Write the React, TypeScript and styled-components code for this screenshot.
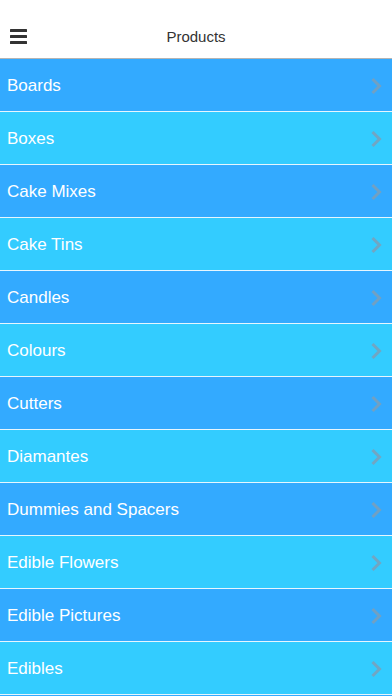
import React from "react";
import styled, { createGlobalStyle } from "styled-components";

const Global = createGlobalStyle`
  html, body { margin: 0; padding: 0; background: #ffffff; }
  body { font-family: "Liberation Sans", Arial, sans-serif; overflow: hidden; }
`;

const Page = styled.div`
  width: 392px;
  height: 696px;
  overflow: hidden;
  display: flex;
  flex-direction: column;
  background: #ffffff;
`;

const Header = styled.header`
  height: 59px;
  flex: none;
  display: grid;
  grid-template-columns: 60px 1fr 60px;
  align-items: center;
  padding-top: 15px;
  box-sizing: border-box;
  border-bottom: 1px solid #b4b4b4;
  background: #ffffff;
`;

const MenuButton = styled.div`
  display: flex;
  flex-direction: column;
  gap: 3px;
  padding-left: 10px;
  width: 17px;
`;

const MenuBar = styled.span`
  display: block;
  width: 17px;
  height: 3px;
  background: #333333;
  border-radius: 0.5px;
`;

const Title = styled.h1`
  margin: 0;
  text-align: center;
  font-size: 15px;
  font-weight: normal;
  color: #333333;
`;

const List = styled.ul`
  list-style: none;
  margin: 0;
  padding: 0;
  flex: 1;
  background: #33aaff;
`;

const Row = styled.li<{ $alt: boolean }>`
  height: 50px;
  display: flex;
  align-items: center;
  justify-content: space-between;
  padding: 2px 10px 0 7px;
  background: ${(p) => (p.$alt ? "#33ccff" : "#33aaff")};
  border-bottom: 1px solid #e6f6ff;
  color: #ffffff;
  font-size: 17px;
`;

const Chevron = styled.svg`
  width: 12px;
  height: 18px;
  flex: none;
`;

const items = [
  "Boards",
  "Boxes",
  "Cake Mixes",
  "Cake Tins",
  "Candles",
  "Colours",
  "Cutters",
  "Diamantes",
  "Dummies and Spacers",
  "Edible Flowers",
  "Edible Pictures",
  "Edibles",
];

export default function App() {
  return (
    <Page>
      <Global />
      <Header>
        <MenuButton>
          <MenuBar />
          <MenuBar />
          <MenuBar />
        </MenuButton>
        <Title>Products</Title>
        <div />
      </Header>
      <List>
        {items.map((name, i) => (
          <Row key={name} $alt={i % 2 === 1}>
            <span>{name}</span>
            <Chevron viewBox="0 0 12 18">
              <path
                d="M2.5 2 L9.5 9 L2.5 16"
                fill="none"
                stroke="#7c9fb8"
                strokeOpacity="0.85"
                strokeWidth="3"
              />
            </Chevron>
          </Row>
        ))}
      </List>
    </Page>
  );
}
